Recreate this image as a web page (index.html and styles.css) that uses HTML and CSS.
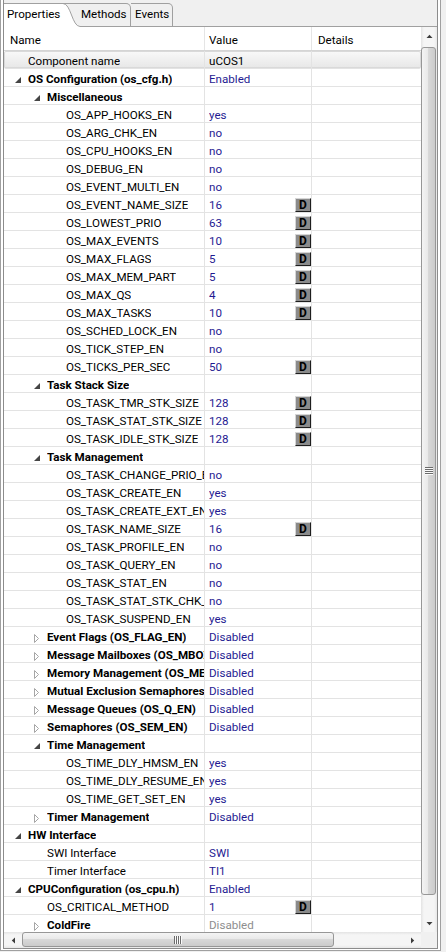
FILE: index.html
```html
<!DOCTYPE html>
<html>
<head>
<meta charset="utf-8">
<link rel="stylesheet" href="styles.css">
</head>
<body>
<svg class="defs" width="0" height="0">
  <defs>
    <symbol id="op" viewBox="0 0 6 6"><path d="M6 0V6H0Z" fill="#454545"/></symbol>
    <symbol id="cl" viewBox="0 0 6 9"><path d="M0.5 0.5L4.5 4.5L0.5 8.5Z" fill="#fff" stroke="#a6a6a6"/></symbol>
  </defs>
</svg>
<div class="outer">
  <div class="inner">
    <div class="tabs">
      <div class="tab tab-sel">Properties</div>
      <svg class="tab-curve" width="17" height="24" viewBox="0 0 17 24">
        <rect width="17" height="24" fill="#f0f0f0"/>
        <path d="M0 0C8 0 9 23 17 23V24H0Z" fill="#fff"/>
        <path d="M0 0.5H17" stroke="#a0a0a0" fill="none"/>
        <path d="M0 0.5C8 0.5 9 23.5 17 23.5" stroke="#a0a0a0" fill="none"/>
      </svg>
      <div class="tab tab-m">Methods</div>
      <div class="tab tab-e">Events</div>
      <div class="tab-fill"></div>
    </div>
    <div class="grid">
      <div class="table">
        <div class="thead">
          <div class="th th-name">Name</div>
          <div class="th th-val">Value</div>
          <div class="th th-det">Details</div>
        </div>

        <div class="row sel"><div class="cell name l0"><span class="tg"></span><span class="txt">Component name</span></div><div class="cell val black"><span class="txt">uCOS1</span></div><div class="cell"></div></div>
        <div class="row"><div class="cell name l0"><span class="tg"><svg class="op" width="6" height="6"><use href="#op"/></svg></span><span class="txt b">OS Configuration (os_cfg.h)</span></div><div class="cell val"><span class="txt">Enabled</span></div><div class="cell"></div></div>
        <div class="row"><div class="cell name l1"><span class="tg"><svg class="op" width="6" height="6"><use href="#op"/></svg></span><span class="txt b">Miscellaneous</span></div><div class="cell val"></div><div class="cell"></div></div>
        <div class="row"><div class="cell name l2"><span class="tg"></span><span class="txt">OS_APP_HOOKS_EN</span></div><div class="cell val"><span class="txt">yes</span></div><div class="cell"></div></div>
        <div class="row"><div class="cell name l2"><span class="tg"></span><span class="txt">OS_ARG_CHK_EN</span></div><div class="cell val"><span class="txt">no</span></div><div class="cell"></div></div>
        <div class="row"><div class="cell name l2"><span class="tg"></span><span class="txt">OS_CPU_HOOKS_EN</span></div><div class="cell val"><span class="txt">no</span></div><div class="cell"></div></div>
        <div class="row"><div class="cell name l2"><span class="tg"></span><span class="txt">OS_DEBUG_EN</span></div><div class="cell val"><span class="txt">no</span></div><div class="cell"></div></div>
        <div class="row"><div class="cell name l2"><span class="tg"></span><span class="txt">OS_EVENT_MULTI_EN</span></div><div class="cell val"><span class="txt">no</span></div><div class="cell"></div></div>
        <div class="row"><div class="cell name l2"><span class="tg"></span><span class="txt">OS_EVENT_NAME_SIZE</span></div><div class="cell val"><span class="txt">16</span><span class="dbtn">D</span></div><div class="cell"></div></div>
        <div class="row"><div class="cell name l2"><span class="tg"></span><span class="txt">OS_LOWEST_PRIO</span></div><div class="cell val"><span class="txt">63</span><span class="dbtn">D</span></div><div class="cell"></div></div>
        <div class="row"><div class="cell name l2"><span class="tg"></span><span class="txt">OS_MAX_EVENTS</span></div><div class="cell val"><span class="txt">10</span><span class="dbtn">D</span></div><div class="cell"></div></div>
        <div class="row"><div class="cell name l2"><span class="tg"></span><span class="txt">OS_MAX_FLAGS</span></div><div class="cell val"><span class="txt">5</span><span class="dbtn">D</span></div><div class="cell"></div></div>
        <div class="row"><div class="cell name l2"><span class="tg"></span><span class="txt">OS_MAX_MEM_PART</span></div><div class="cell val"><span class="txt">5</span><span class="dbtn">D</span></div><div class="cell"></div></div>
        <div class="row"><div class="cell name l2"><span class="tg"></span><span class="txt">OS_MAX_QS</span></div><div class="cell val"><span class="txt">4</span><span class="dbtn">D</span></div><div class="cell"></div></div>
        <div class="row"><div class="cell name l2"><span class="tg"></span><span class="txt">OS_MAX_TASKS</span></div><div class="cell val"><span class="txt">10</span><span class="dbtn">D</span></div><div class="cell"></div></div>
        <div class="row"><div class="cell name l2"><span class="tg"></span><span class="txt">OS_SCHED_LOCK_EN</span></div><div class="cell val"><span class="txt">no</span></div><div class="cell"></div></div>
        <div class="row"><div class="cell name l2"><span class="tg"></span><span class="txt">OS_TICK_STEP_EN</span></div><div class="cell val"><span class="txt">no</span></div><div class="cell"></div></div>
        <div class="row"><div class="cell name l2"><span class="tg"></span><span class="txt">OS_TICKS_PER_SEC</span></div><div class="cell val"><span class="txt">50</span><span class="dbtn">D</span></div><div class="cell"></div></div>
        <div class="row"><div class="cell name l1"><span class="tg"><svg class="op" width="6" height="6"><use href="#op"/></svg></span><span class="txt b">Task Stack Size</span></div><div class="cell val"></div><div class="cell"></div></div>
        <div class="row"><div class="cell name l2"><span class="tg"></span><span class="txt">OS_TASK_TMR_STK_SIZE</span></div><div class="cell val"><span class="txt">128</span><span class="dbtn">D</span></div><div class="cell"></div></div>
        <div class="row"><div class="cell name l2"><span class="tg"></span><span class="txt">OS_TASK_STAT_STK_SIZE</span></div><div class="cell val"><span class="txt">128</span><span class="dbtn">D</span></div><div class="cell"></div></div>
        <div class="row"><div class="cell name l2"><span class="tg"></span><span class="txt">OS_TASK_IDLE_STK_SIZE</span></div><div class="cell val"><span class="txt">128</span><span class="dbtn">D</span></div><div class="cell"></div></div>
        <div class="row"><div class="cell name l1"><span class="tg"><svg class="op" width="6" height="6"><use href="#op"/></svg></span><span class="txt b">Task Management</span></div><div class="cell val"></div><div class="cell"></div></div>
        <div class="row"><div class="cell name l2"><span class="tg"></span><span class="txt">OS_TASK_CHANGE_PRIO_EN</span></div><div class="cell val"><span class="txt">no</span></div><div class="cell"></div></div>
        <div class="row"><div class="cell name l2"><span class="tg"></span><span class="txt">OS_TASK_CREATE_EN</span></div><div class="cell val"><span class="txt">yes</span></div><div class="cell"></div></div>
        <div class="row"><div class="cell name l2"><span class="tg"></span><span class="txt">OS_TASK_CREATE_EXT_EN</span></div><div class="cell val"><span class="txt">yes</span></div><div class="cell"></div></div>
        <div class="row"><div class="cell name l2"><span class="tg"></span><span class="txt">OS_TASK_NAME_SIZE</span></div><div class="cell val"><span class="txt">16</span><span class="dbtn">D</span></div><div class="cell"></div></div>
        <div class="row"><div class="cell name l2"><span class="tg"></span><span class="txt">OS_TASK_PROFILE_EN</span></div><div class="cell val"><span class="txt">no</span></div><div class="cell"></div></div>
        <div class="row"><div class="cell name l2"><span class="tg"></span><span class="txt">OS_TASK_QUERY_EN</span></div><div class="cell val"><span class="txt">no</span></div><div class="cell"></div></div>
        <div class="row"><div class="cell name l2"><span class="tg"></span><span class="txt">OS_TASK_STAT_EN</span></div><div class="cell val"><span class="txt">no</span></div><div class="cell"></div></div>
        <div class="row"><div class="cell name l2"><span class="tg"></span><span class="txt">OS_TASK_STAT_STK_CHK_EN</span></div><div class="cell val"><span class="txt">no</span></div><div class="cell"></div></div>
        <div class="row"><div class="cell name l2"><span class="tg"></span><span class="txt">OS_TASK_SUSPEND_EN</span></div><div class="cell val"><span class="txt">yes</span></div><div class="cell"></div></div>
        <div class="row"><div class="cell name l1"><span class="tg"><svg class="cl" width="6" height="9"><use href="#cl"/></svg></span><span class="txt b">Event Flags (OS_FLAG_EN)</span></div><div class="cell val"><span class="txt">Disabled</span></div><div class="cell"></div></div>
        <div class="row"><div class="cell name l1"><span class="tg"><svg class="cl" width="6" height="9"><use href="#cl"/></svg></span><span class="txt b">Message Mailboxes (OS_MBOX_EN)</span></div><div class="cell val"><span class="txt">Disabled</span></div><div class="cell"></div></div>
        <div class="row"><div class="cell name l1"><span class="tg"><svg class="cl" width="6" height="9"><use href="#cl"/></svg></span><span class="txt b">Memory Management (OS_MEM_EN)</span></div><div class="cell val"><span class="txt">Disabled</span></div><div class="cell"></div></div>
        <div class="row"><div class="cell name l1"><span class="tg"><svg class="cl" width="6" height="9"><use href="#cl"/></svg></span><span class="txt b">Mutual Exclusion Semaphores (OS_MUTEX_EN)</span></div><div class="cell val"><span class="txt">Disabled</span></div><div class="cell"></div></div>
        <div class="row"><div class="cell name l1"><span class="tg"><svg class="cl" width="6" height="9"><use href="#cl"/></svg></span><span class="txt b">Message Queues (OS_Q_EN)</span></div><div class="cell val"><span class="txt">Disabled</span></div><div class="cell"></div></div>
        <div class="row"><div class="cell name l1"><span class="tg"><svg class="cl" width="6" height="9"><use href="#cl"/></svg></span><span class="txt b">Semaphores (OS_SEM_EN)</span></div><div class="cell val"><span class="txt">Disabled</span></div><div class="cell"></div></div>
        <div class="row"><div class="cell name l1"><span class="tg"><svg class="op" width="6" height="6"><use href="#op"/></svg></span><span class="txt b">Time Management</span></div><div class="cell val"></div><div class="cell"></div></div>
        <div class="row"><div class="cell name l2"><span class="tg"></span><span class="txt">OS_TIME_DLY_HMSM_EN</span></div><div class="cell val"><span class="txt">yes</span></div><div class="cell"></div></div>
        <div class="row"><div class="cell name l2"><span class="tg"></span><span class="txt">OS_TIME_DLY_RESUME_EN</span></div><div class="cell val"><span class="txt">yes</span></div><div class="cell"></div></div>
        <div class="row"><div class="cell name l2"><span class="tg"></span><span class="txt">OS_TIME_GET_SET_EN</span></div><div class="cell val"><span class="txt">yes</span></div><div class="cell"></div></div>
        <div class="row"><div class="cell name l1"><span class="tg"><svg class="cl" width="6" height="9"><use href="#cl"/></svg></span><span class="txt b">Timer Management</span></div><div class="cell val"><span class="txt">Disabled</span></div><div class="cell"></div></div>
        <div class="row"><div class="cell name l0"><span class="tg"><svg class="op" width="6" height="6"><use href="#op"/></svg></span><span class="txt b">HW Interface</span></div><div class="cell val"></div><div class="cell"></div></div>
        <div class="row"><div class="cell name l1"><span class="tg"></span><span class="txt">SWI Interface</span></div><div class="cell val"><span class="txt">SWI</span></div><div class="cell"></div></div>
        <div class="row"><div class="cell name l1"><span class="tg"></span><span class="txt">Timer Interface</span></div><div class="cell val"><span class="txt">TI1</span></div><div class="cell"></div></div>
        <div class="row"><div class="cell name l0"><span class="tg"><svg class="op" width="6" height="6"><use href="#op"/></svg></span><span class="txt b">CPUConfiguration (os_cpu.h)</span></div><div class="cell val"><span class="txt">Enabled</span></div><div class="cell"></div></div>
        <div class="row"><div class="cell name l1"><span class="tg"></span><span class="txt">OS_CRITICAL_METHOD</span></div><div class="cell val"><span class="txt">1</span><span class="dbtn">D</span></div><div class="cell"></div></div>
        <div class="row"><div class="cell name l1"><span class="tg"><svg class="cl" width="6" height="9"><use href="#cl"/></svg></span><span class="txt b">ColdFire</span></div><div class="cell val gray"><span class="txt">Disabled</span></div><div class="cell"></div></div>
      </div>

      <div class="vscroll">
        <div class="sbtn"><svg width="7" height="4" viewBox="0 0 7 4"><path d="M0.5 4L3.5 0.8L6.5 4Z" fill="#3c3c3c"/></svg></div>
        <div class="vthumb">
          <svg width="8" height="8" viewBox="0 0 8 8"><path d="M0 0.5H8M0 2.5H8M0 4.5H8M0 6.5H8" stroke="#6b6b6b"/><path d="M0 1.5H8M0 3.5H8M0 5.5H8M0 7.5H8" stroke="#fafafa"/></svg>
        </div>
        <div class="vspace"></div>
        <div class="sbtn"><svg width="7" height="4" viewBox="0 0 7 4"><path d="M0.5 0L3.5 3.2L6.5 0Z" fill="#3c3c3c"/></svg></div>
      </div>

      <div class="hscroll">
        <div class="sbtn"><svg width="4" height="7" viewBox="0 0 4 7"><path d="M4 0.5L0.8 3.5L4 6.5Z" fill="#3c3c3c"/></svg></div>
        <div class="hthumb">
          <svg width="8" height="8" viewBox="0 0 8 8"><path d="M0.5 0V8M2.5 0V8M4.5 0V8M6.5 0V8" stroke="#6b6b6b"/><path d="M1.5 0V8M3.5 0V8M5.5 0V8M7.5 0V8" stroke="#fafafa"/></svg>
        </div>
        <div class="hspace"></div>
        <div class="sbtn"><svg width="4" height="7" viewBox="0 0 4 7"><path d="M0 0.5L3.2 3.5L0 6.5Z" fill="#3c3c3c"/></svg></div>
      </div>

      <div class="corner"></div>
    </div>
  </div>
</div>
</body>
</html>
```

FILE: styles.css
```css
html, body {
  margin: 0;
  padding: 0;
}
body {
  background: #f0f0f0;
  font-family: Roboto, "Liberation Sans", Arial, sans-serif;
  font-size: 11.6px;
  color: #000;
}
.defs {
  position: absolute;
  width: 0;
  height: 0;
  overflow: hidden;
}

.outer {
  width: 441px;
  box-sizing: border-box;
  border: 1px solid #a0a0a0;
  border-top: none;
  padding: 0 2px 1px 2px;
  background: #fff;
}
.inner {
  border: 1px solid #8c8c8c;
  border-top: none;
}

/* tabs */
.tabs {
  display: flex;
  height: 27px;
  box-sizing: border-box;
  padding-top: 3px;
  background: #f0f0f0;
}
.tab {
  flex: none;
  height: 24px;
  box-sizing: border-box;
  border-top: 1px solid #a0a0a0;
  line-height: 21px;
  white-space: nowrap;
}
.tab-sel {
  width: 59px;
  padding-left: 3px;
  background: #fff;
}
.tab-curve {
  flex: none;
  display: block;
}
.tab-m {
  width: 51px;
  padding-left: 1px;
  border-right: 1px solid #a0a0a0;
  border-bottom: 1px solid #a0a0a0;
  border-top-right-radius: 5px;
  background: #f0f0f0;
}
.tab-e {
  width: 42px;
  padding-left: 4px;
  border-right: 1px solid #a0a0a0;
  border-bottom: 1px solid #a0a0a0;
  border-top-right-radius: 5px;
  background: #f0f0f0;
}
.tab-fill {
  flex: 1;
  height: 24px;
  box-sizing: border-box;
  border-bottom: 1px solid #a0a0a0;
}

/* grid */
.grid {
  display: grid;
  grid-template-columns: 417px 16px;
  grid-template-rows: 905px 16px;
}
.table {
  grid-row: 1;
  grid-column: 1;
  overflow: hidden;
  background: #fff;
}
.thead {
  display: grid;
  grid-template-columns: 201px 107px 1fr;
  height: 24px;
  box-sizing: border-box;
  border-bottom: 1px solid #d5d5d5;
}
.th {
  border-right: 1px solid #e5e5e5;
  padding: 4px 0 0 6px;
  line-height: 18px;
  white-space: nowrap;
}
.th-val {
  padding-left: 4px;
}
.th-det {
  border-right: none;
}

.row {
  display: grid;
  grid-template-columns: 201px 107px 1fr;
  height: 18px;
  box-sizing: border-box;
  border-bottom: 1px solid #e3e3e3;
}
.row.sel {
  background: linear-gradient(#f9f9f9, #e7e7e7);
  box-shadow: inset 0 0 0 1px #d9d9d9;
  border-radius: 2px;
}
.cell {
  border-right: 1px solid #e3e3e3;
  overflow: hidden;
  white-space: nowrap;
  min-width: 0;
}
.cell:last-child {
  border-right: none;
}
.name {
  display: flex;
  align-items: flex-start;
}
.l0 { padding-left: 10px; }
.l1 { padding-left: 29px; }
.l2 { padding-left: 48px; }
.tg {
  flex: none;
  width: 14px;
  display: flex;
  align-items: flex-start;
}
.tg svg {
  display: block;
  margin-left: 1px;
}
.tg .op { margin-top: 8px; }
.tg .cl { margin-top: 7px; }
.txt {
  padding-top: 3px;
  line-height: 15px;
  min-width: 0;
  overflow: hidden;
  white-space: nowrap;
}
.txt.b {
  font-weight: 700;
}

.val {
  display: flex;
  justify-content: space-between;
  align-items: flex-start;
  padding-left: 4px;
  color: #1f1b92;
}
.val.black { color: #000; }
.val.gray { color: #8e8e8e; }
.dbtn {
  flex: none;
  width: 16px;
  height: 14px;
  margin-top: 3px;
  box-sizing: border-box;
  background: #8b8b8b;
  border: 1px solid;
  border-color: #d6d6d6 #1e1e1e #1e1e1e #d6d6d6;
  font-weight: 700;
  font-size: 12px;
  line-height: 12px;
  text-align: center;
  color: #000;
}

/* scrollbars */
.vscroll {
  grid-row: 1;
  grid-column: 2;
  display: flex;
  flex-direction: column;
  background: linear-gradient(to right, #e3e3e3, #f5f5f5 18%, #f5f5f5 82%, #e8e8e8);
}
.sbtn {
  flex: none;
  width: 16px;
  height: 17px;
  display: flex;
  align-items: center;
  justify-content: center;
}
.sbtn svg { display: block; }
.vthumb {
  flex: none;
  height: 848px;
  margin: 3px 1px 0 0;
  box-sizing: border-box;
  border: 1px solid #979797;
  border-radius: 3px;
  background: linear-gradient(to right, #f4f4f4, #e9e9e9 45%, #d8d8d8 50%, #cbcbcb);
  display: flex;
  align-items: center;
  justify-content: center;
}
.vspace { flex: 1; }

.hscroll {
  grid-row: 2;
  grid-column: 1;
  display: flex;
  background: linear-gradient(#e3e3e3, #f5f5f5 18%, #f5f5f5 82%, #e8e8e8);
}
.hscroll .sbtn {
  width: 17px;
  height: 16px;
}
.hthumb {
  flex: none;
  width: 312px;
  height: 15px;
  margin-left: 1px;
  box-sizing: border-box;
  border: 1px solid #979797;
  border-radius: 3px;
  background: linear-gradient(#f4f4f4, #e9e9e9 45%, #d8d8d8 50%, #cbcbcb);
  display: flex;
  align-items: center;
  justify-content: center;
}
.hspace { flex: 1; }
.corner {
  grid-row: 2;
  grid-column: 2;
  background: #f0f0f0;
}
```
